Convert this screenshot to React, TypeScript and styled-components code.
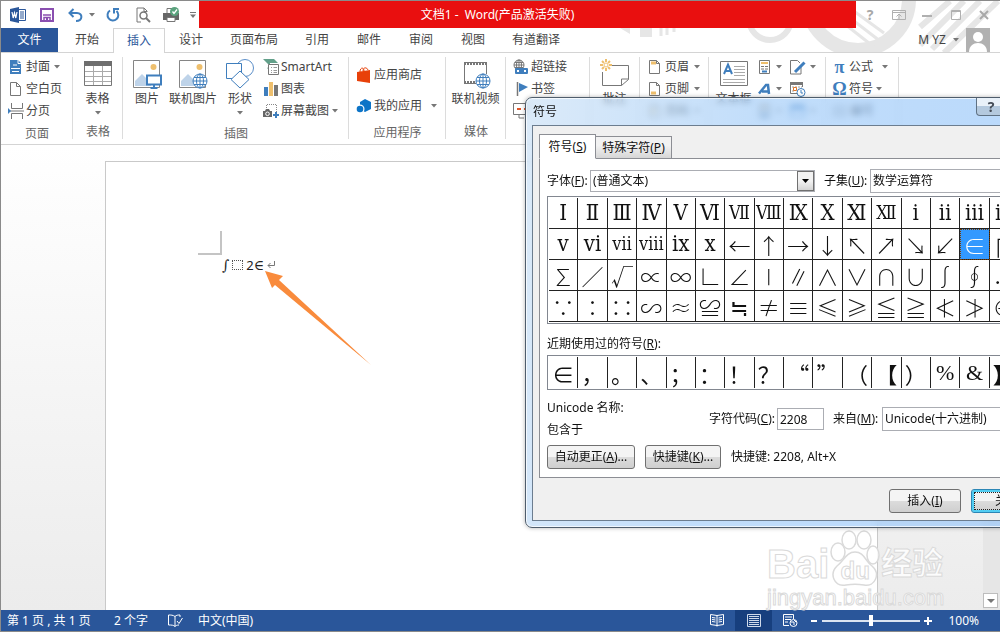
import React from 'react';
import styled, { createGlobalStyle, css } from 'styled-components';

const GlobalStyle = createGlobalStyle`
  *, *::before, *::after { box-sizing: border-box; }
  body { margin: 0; background: #fff; }
  body, button, input, select {
    font-family: "Noto Sans", "Noto Sans CJK SC", sans-serif;
    font-size: 12px;
    line-height: 16px;
    color: #444;
  }
  button { background: none; border: 0; padding: 0; }
  svg { display: block; flex: none; }
`;

const Window = styled.div`
  position: relative;
  display: flex;
  flex-direction: column;
  min-height: 100vh;
  overflow: hidden;
  border: 1px solid #8a8a8a;
  border-width: 1px 0 1px 1px;
`;

/* ---------- Title bar and tabs ---------- */

const Header = styled.header`
  position: relative;
`;

const Decoration = styled.svg`
  position: absolute;
  top: 0;
  right: 0;
  z-index: -1;
`;

const TitleBar = styled.div`
  display: flex;
  height: 27px;
`;

const QuickAccess = styled.div`
  display: flex;
  align-items: center;
  width: 198px;
  padding-left: 9px;
`;

const QuickButton = styled.button<{ $width: number }>`
  display: flex;
  align-items: center;
  gap: 6px;
  width: ${(p) => p.$width}px;
  height: 26px;
`;

const Banner = styled.h1`
  flex: 1;
  margin: 0;
  padding-right: 60px;
  background: #e90f0f;
  color: #fff;
  font-size: 12px;
  font-weight: 400;
  line-height: 27px;
  text-align: center;
  white-space: pre;
`;

const WindowButtons = styled.div`
  display: flex;
  justify-content: space-between;
  align-items: center;
  width: 144px;
  padding: 0 9px 0 7px;
`;

const WindowButton = styled.button`
  display: grid;
  place-items: center;
  width: 14px;
  height: 20px;
  color: #a8a8a8;
  font-size: 14px;
  font-weight: 700;
`;

const TabRow = styled.nav`
  display: flex;
  height: 25px;
  border-bottom: 1px solid #d4d4d4;
`;

const FileTab = styled.button`
  width: 57px;
  margin-right: 3px;
  background: #2a569a;
  color: #fff;
`;

const Tab = styled.button<{ $wide?: boolean; $active?: boolean }>`
  width: ${(p) => (p.$wide ? 74 : 52)}px;
  ${(p) =>
    p.$active &&
    css`
      height: 25px;
      border: 1px solid #d4d4d4;
      border-bottom: 0;
      background: #fff;
      color: #2b579a;
    `}
`;

const Account = styled.div`
  display: flex;
  align-items: center;
  gap: 7px;
  margin-left: auto;
  padding-right: 10px;
`;

/* ---------- Ribbon ---------- */

const Ribbon = styled.div`
  display: flex;
  height: 92px;
  padding-top: 3px;
  border-bottom: 1px solid #d4d4d4;
  background: #fff;
`;

const Group = styled.section<{ $width: number; $pad?: number }>`
  position: relative;
  display: flex;
  flex-direction: column;
  flex: none;
  width: ${(p) => p.$width}px;
  padding-left: ${(p) => p.$pad ?? 0}px;
  &::after {
    content: '';
    position: absolute;
    right: 0;
    top: 1px;
    bottom: 5px;
    width: 1px;
    background: #dcdcdc;
  }
`;

const GroupBody = styled.div`
  display: flex;
  height: 66px;
`;

const GroupLabel = styled.div<{ $shift?: number }>`
  margin-left: -${(p) => p.$shift ?? 0}px;
  line-height: 24px;
  color: #666;
  text-align: center;
`;

const Column = styled.div<{ $pad?: number; $width?: number }>`
  display: flex;
  flex-direction: column;
  padding-top: ${(p) => p.$pad ?? 0}px;
  width: ${(p) => (p.$width ? `${p.$width}px` : 'auto')};
`;

const SmallButton = styled.button<{ $height?: number }>`
  display: flex;
  align-items: center;
  gap: 2px;
  height: ${(p) => p.$height ?? 22}px;
  white-space: nowrap;
`;

const BigButton = styled.button<{ $width: number }>`
  display: flex;
  flex-direction: column;
  align-items: center;
  width: ${(p) => p.$width}px;
  padding-top: 3px;
  white-space: nowrap;
`;

const BigLabel = styled.span`
  margin: 2px 0 4px;
`;

const CaretShape = styled.svg<{ $gap?: number }>`
  margin-left: ${(p) => p.$gap ?? 0}px;
`;

const Caret = ({ gap }: { gap?: number }) => (
  <CaretShape $gap={gap} width="6" height="4" viewBox="0 0 6 4">
    <path d="M0 0h6L3 3.5z" fill="#777" />
  </CaretShape>
);

/* ---------- Icons ---------- */

const Svg = ({ w, h, children }: { w: number; h: number; children: React.ReactNode }) => (
  <svg width={w} height={h} viewBox={`0 0 ${w} ${h}`} fill="none" stroke="#777" aria-hidden="true">
    {children}
  </svg>
);

const BLUE = '#3f7ebd';

const WordIcon = () => (
  <Svg w={17} h={16}>
    <path d="M9 2.5h6.5v11H9M10 5h4M10 7h4M10 9h4M10 11h4" stroke="#2b579a" />
    <path d="M0 2l9-2v16l-9-2z" fill="#2b579a" stroke="none" />
    <path d="M2 5l1.2 6L4.500 6l1.300 5L7 5" stroke="#fff" strokeWidth="1.200" />
  </Svg>
);

const SaveIcon = () => (
  <Svg w={14} h={14}>
    <path d="M1 1h12v12H1z" stroke="#8a4fb0" strokeWidth="2" />
    <path d="M3 7h8M4 13V9.500h6V13" stroke="#8a4fb0" strokeWidth="1.500" />
    <path d="M6 10h2v3H6z" fill="#8a4fb0" stroke="none" />
  </Svg>
);

const UndoIcon = () => (
  <Svg w={15} h={14}>
    <path d="M2 5h7c6 0 6 8-1 8" stroke={BLUE} strokeWidth="2" />
    <path d="M5.500 1L1.500 5l4 4" stroke={BLUE} strokeWidth="2" />
  </Svg>
);

const RedoIcon = () => (
  <Svg w={14} h={14}>
    <path d="M4 2.500A5.400 5.400 0 1 0 10.500 3" stroke={BLUE} strokeWidth="2" />
    <path d="M8 5.500V1h5" stroke={BLUE} strokeWidth="2" />
  </Svg>
);

const PreviewIcon = () => (
  <Svg w={15} h={16}>
    <path d="M5 15H1V1h7l3 3v1M8 1v3.500h3" />
    <circle cx="7.500" cy="8.500" r="3.500" strokeWidth="1.500" fill="#fff" />
    <path d="M10 11l4 4" strokeWidth="2" />
  </Svg>
);

const PrintIcon = () => (
  <Svg w={17} h={16}>
    <path d="M0 6h16v7H0z" fill="#666" stroke="none" />
    <path d="M4 6V1.500h5V6M4 10.500h8v4H4z" fill="#fff" />
    <circle cx="11.500" cy="4.500" r="4.500" fill="#5aa27d" stroke="none" />
    <path d="M9.500 4.500l1.500 2 3-4" stroke="#fff" strokeWidth="1.300" />
  </Svg>
);

const Globe = ({ cx, cy, r = 7, color = BLUE }: { cx: number; cy: number; r?: number; color?: string }) => (
  <g stroke={color}>
    <circle cx={cx} cy={cy} r={r} fill="#fff" />
    <ellipse cx={cx} cy={cy} rx={r / 2} ry={r} />
    <path d={`M${cx} ${cy - r}v${2 * r}M${cx - r} ${cy}h${2 * r}M${cx - r + 1} ${cy - r / 2}h${2 * r - 2}M${cx - r + 1} ${cy + r / 2}h${2 * r - 2}`} />
  </g>
);

const CoverIcon = () => (
  <Svg w={16} h={16}>
    <path d="M2 1h8l3 3v11H2z" fill={BLUE} stroke="none" />
    <path d="M10 1v3.500h3M5 6h4M3 9.500h9M4 12.500h7" stroke="#fff" />
  </Svg>
);

const BlankIcon = () => (
  <Svg w={16} h={16}>
    <path d="M2.500 1.500h6l4 4v9h-10zM8.500 1.500v4h4" />
  </Svg>
);

const BreakIcon = () => (
  <Svg w={16} h={16}>
    <path d="M3.500 0v5.500h11V0M3.500 16v-5.500h11V16M2 8h14" />
    <path d="M0 5l3 3-3 3z" fill={BLUE} stroke="none" />
  </Svg>
);

const TableIcon = () => (
  <Svg w={28} h={30}>
    <path d="M.5 2.500h27v24H.5z" fill="#fff" />
    <path d="M0 2h28v5H0z" fill="#6e6e6e" stroke="none" />
    <path d="M1 12.500h26M1 17.500h26M1 22.500h26M9.500 7v19M18.500 7v19" stroke="#aaa" />
  </Svg>
);

const PictureBase = () => (
  <>
    <path d="M1.500 1.500h26v27h-26z" fill="#fff" stroke="#858585" />
    <circle cx="21.500" cy="8" r="3" fill="#eebf6d" stroke="none" />
    <path d="M3 27V22l7-7 9 9v3z" fill="#bed3e9" stroke="none" />
  </>
);

const PictureIcon = () => (
  <Svg w={30} h={30}>
    <PictureBase />
    <path d="M15 16.500h14v9H15z" fill="#fff" stroke={BLUE} strokeWidth="2" />
    <path d="M22 26v3M18.500 29h7" stroke={BLUE} strokeWidth="2" />
  </Svg>
);

const OnlinePictureIcon = () => (
  <Svg w={30} h={30}>
    <PictureBase />
    <Globe cx={22} cy={22} />
  </Svg>
);

const ShapesIcon = () => (
  <Svg w={30} h={30}>
    <circle cx="20" cy="9" r="8.500" stroke="#5c8fc9" />
    <path d="M1.500 4.500h15v15h-15z" fill="#fff" stroke={BLUE} />
    <path d="M15 12l9 8.500-9 8.500-9-8.500z" fill="#fff" stroke={BLUE} />
  </Svg>
);

const SmartArtIcon = () => (
  <Svg w={16} h={16}>
    <path d="M0 0h11l4 4H7v4l-3 2 2-4z" fill="#63a08a" stroke="none" />
    <path d="M5.500 5.500h10v10h-10z" fill="#fff" />
    <path d="M8 8.500h1M10.500 8.500H14M8 11.500h1M10.500 11.500H14M8 13.500h1M10.500 13.500H14" stroke="#999" />
  </Svg>
);

const ChartIcon = () => (
  <Svg w={16} h={16}>
    <path d="M1 6h4v9H1z" fill={BLUE} stroke="none" />
    <path d="M6 1h4v14H6z" fill="#eebf6d" stroke="none" />
    <path d="M11 4h4v11h-4z" fill="#777" stroke="none" />
  </Svg>
);

const ScreenshotIcon = () => (
  <Svg w={16} h={16}>
    <path d="M3.500 5V1.500h10V9" stroke="#888" strokeDasharray="1 1" />
    <path d="M0 8h2l1-2h3l1 2h2v6H0z" fill="#666" stroke="none" />
    <circle cx="4.500" cy="10.800" r="1.800" stroke="#fff" />
    <path d="M13 9v6M10 12h6" stroke={BLUE} strokeWidth="2" />
  </Svg>
);

const StoreIcon = () => (
  <Svg w={16} h={16}>
    <path d="M4 5c0-5 4-5 4-1M7 4c0-4 4-4 5-1" stroke="#e8410a" />
    <path d="M1 5l13-2v13L1 14z" fill="#e8410a" stroke="none" />
  </Svg>
);

const MyAppsIcon = () => (
  <Svg w={16} h={16}>
    <path d="M9 1l6 3v7l-6 3-5-3V4z" fill="#0d74c7" stroke="none" />
    <circle cx="4" cy="11" r="4.500" fill="#fff" stroke="none" />
    <circle cx="4" cy="11" r="3.300" fill="#0d74c7" stroke="none" />
  </Svg>
);

const VideoIcon = () => (
  <Svg w={30} h={30}>
    <path d="M3.500 3v21M25.500 3v12" />
    <path d="M3 4.500h23M3 23.500h12" strokeWidth="3" strokeDasharray="2 1" />
    <path d="M3 3.500h23M3 24.500h12" />
    <Globe cx={22} cy={22} />
  </Svg>
);

const LinkIcon = () => (
  <Svg w={16} h={16}>
    <Globe cx={6} cy={6} r={5} color="#777" />
    <path d="M3 10h5v4H3zM9 10h5v4H9zM6 12h5" fill="#fff" stroke={BLUE} strokeWidth="2" strokeLinejoin="round" />
  </Svg>
);

const BookmarkIcon = () => (
  <Svg w={16} h={16}>
    <path d="M4.500 1v14" strokeWidth="1.500" />
    <path d="M6 2l9 4-9 5z" fill={BLUE} stroke="none" />
  </Svg>
);

const CrossRefIcon = () => (
  <Svg w={16} h={16}>
    <path d="M.5.5h13v11H.5zM6 12v3h5" fill="#fff" />
    <path d="M4 6h4M11 6h2" stroke="#e0572c" strokeWidth="2" />
  </Svg>
);

const CommentIcon = () => (
  <Svg w={30} h={30}>
    <path d="M12 6.500h16.500v14l-7 6H2.500V13M28.500 20h-7v6.500" />
    <g stroke="#eebf6d" strokeWidth="2">
      <path d="M6 0v3M6 9v3M0 6h3M9 6h3M2 2l2 2M8 8l2 2M10 2L8 4M4 8l-2 2" />
    </g>
    <circle cx="6" cy="6" r="2" stroke="#eebf6d" fill="#fff" />
  </Svg>
);

const PageBandIcon = ({ y }: { y: number }) => (
  <Svg w={16} h={16}>
    <path d="M2.500 1.500h7l3 3v10h-10zM9.500 1.500v3h3" />
    <path d={`M4 ${y}h5`} stroke="#eebf6d" strokeWidth="3" />
  </Svg>
);

const TextBoxIcon = () => (
  <Svg w={28} h={30}>
    <path d="M.5 2.500h27v24H.5z" fill="#fff" />
    <path d="M4 15L8 5.500 12 15M5.500 12h5" stroke={BLUE} strokeWidth="2" />
    <path d="M14 7.500h11M14 10.500h11M14 13.500h11M14 16.500h11M3 20.500h22M3 23.500h22" stroke="#aaa" />
  </Svg>
);

const QuickPartsIcon = () => (
  <Svg w={14} h={16}>
    <path d="M1.500 1.500h10v13h-10z" />
    <path d="M3 4h7" stroke="#eebf6d" strokeWidth="2" />
    <path d="M3 7.500h3M7 7.500h3M3 10h3M7 10h3" />
    <path d="M4 12.500h5" stroke={BLUE} strokeWidth="2" />
  </Svg>
);

const WordArtIcon = () => (
  <Svg w={14} h={16}>
    <path d="M1 12.500L8 4h2l1 9M4 10.500h6" stroke={BLUE} strokeWidth="2.500" />
  </Svg>
);

const SignatureIcon = () => (
  <Svg w={18} h={16}>
    <path d="M12 8v7H1.500V1.500h7L11 4" />
    <path d="M15.500 3.500L6 13" stroke={BLUE} strokeWidth="3" />
  </Svg>
);

const DateIcon = () => (
  <Svg w={18} h={16}>
    <path d="M1.500 2v10.500H8M13.500 2v4" />
    <path d="M1 2.500h13" strokeWidth="3" />
    <path d="M3 6h10M3 10h3" strokeDasharray="2 1" stroke="#999" />
    <path d="M4.500 6.500h3v3h-3z" stroke="#e0772c" />
    <circle cx="12" cy="11.500" r="4" fill="#fff" stroke={BLUE} />
    <path d="M12 9v3h2" stroke={BLUE} />
  </Svg>
);

const ObjectIcon = () => (
  <Svg w={18} h={16}>
    <path d="M1.500 2.500h14v11h-14z" stroke={BLUE} />
    <path d="M1 4h15" stroke={BLUE} strokeWidth="4" />
  </Svg>
);

const SymbolIcon = styled.span`
  width: 15px;
  color: #3f7ebd;
  font-family: "Liberation Serif", serif;
  font-size: 18px;
  font-weight: 700;
  text-align: center;
`;

const NumberIcon = () => (
  <Svg w={16} h={16}>
    <path d="M1.500 2.500h12v11h-12z" stroke="#888" />
    <path d="M4 8h7" strokeWidth="2" />
  </Svg>
);

/* ---------- Document ---------- */

const Workspace = styled.main`
  position: relative;
  display: flex;
  flex: 1;
  background: linear-gradient(#fff, #ececec);
`;

const Canvas = styled.div`
  display: flex;
  flex: 1;
  justify-content: center;
  padding: 16px 1px 0 0;
`;

const Page = styled.article`
  position: relative;
  width: 773px;
  padding: 69px 92px 0;
  border: 1px solid #c9c9c9;
  border-bottom: 0;
  background: #fff;
`;

const CropMark = styled.div`
  width: 24px;
  height: 24px;
  border: solid #c4c4c4;
  border-width: 0 2px 2px 0;
`;

const Formula = styled.p`
  display: flex;
  align-items: center;
  gap: 3px;
  margin: 0 0 0 24px;
  color: #222;
  font-family: "Noto Sans", "DejaVu Sans", sans-serif;
  font-size: 13px;
  line-height: 20px;
`;

const MathSign = styled.span`
  font-family: "DejaVu Serif", serif;
  font-size: 14px;
`;

const Placeholder = styled.span`
  width: 11px;
  height: 10px;
  border: 1px dotted #555;
`;

const Pointer = styled.svg`
  position: absolute;
  left: 159px;
  top: 109px;
`;

const ScrollTrack = styled.div`
  display: flex;
  flex-direction: column;
  justify-content: flex-end;
  width: 17px;
  padding: 0 2px 2px 0;
  background: #e6e6e6;
`;

const ScrollButton = styled.button`
  display: grid;
  place-items: center;
  height: 15px;
  border: 1px solid #bdbdbd;
  background: #fff;
`;

/* ---------- Status bar ---------- */

const StatusBar = styled.footer`
  display: flex;
  align-items: center;
  height: 21px;
  padding: 0 21px 0 6px;
  background: #2a569a;
  color: #fff;
  white-space: pre;
`;

const StatusText = styled.span<{ $width: number }>`
  width: ${(p) => p.$width}px;
`;

const Spacer = styled.span`
  flex: 1;
`;

const ViewButton = styled.button<{ $active?: boolean }>`
  display: grid;
  place-items: center;
  width: 37px;
  height: 21px;
  background: ${(p) => (p.$active ? '#173f7e' : 'none')};
`;

const ZoomButton = styled.button`
  width: 10px;
`;

const ZoomSlider = styled.input`
  appearance: none;
  width: 98px;
  height: 12px;
  margin: 0 3px;
  background: linear-gradient(#dbe4f1, #dbe4f1) center / 100% 2px no-repeat;
  &::-webkit-slider-thumb {
    appearance: none;
    width: 4px;
    height: 11px;
    background: #fff;
  }
`;

const ZoomValue = styled.span`
  margin-left: 15px;
`;

/* ---------- Symbol dialog ---------- */

const Dialog = styled.section`
  position: absolute;
  left: 524px;
  top: 96px;
  width: 532px;
  padding: 0 6px 6px;
  border: 1px solid #4f5d6c;
  border-radius: 7px;
  background: linear-gradient(100deg, rgba(200, 223, 245, 0.65), rgba(160, 203, 248, 0.65) 40%, rgba(145, 195, 250, 0.65));
  backdrop-filter: blur(3px);
  box-shadow: inset 0 0 0 1px rgba(255, 255, 255, 0.7), 0 0 4px rgba(0, 0, 0, 0.3);
  color: #111;
  button, input, select { color: #111; }
`;

const DialogTitle = styled.div`
  display: flex;
  align-items: flex-start;
  height: 27px;
`;

const DialogName = styled.h2`
  flex: 1;
  margin: 0 0 0 1px;
  font-size: 12px;
  font-weight: 400;
  line-height: 28px;
`;

const CaptionButton = styled.button<{ $width: number }>`
  width: ${(p) => p.$width}px;
  height: 18px;
  border: 1px solid #5f7183;
  border-top: 0;
  border-radius: 0 0 4px 4px;
  background: linear-gradient(#e9f1f9 50%, #b4c9de 50%);
  font-size: 14px;
  font-weight: 700;
  line-height: 17px;
  && { color: #444c57; }
`;

const DialogBody = styled.div`
  padding: 8px 6px 7px;
  border: 1px solid #6c7d8f;
  background: #f0f0f0;
`;

const DialogTabs = styled.div`
  display: flex;
  align-items: flex-end;
  position: relative;
  margin-bottom: -1px;
`;

const DialogTab = styled.button<{ $width: number; $active?: boolean }>`
  width: ${(p) => p.$width}px;
  height: 23px;
  border: 1px solid #8c8e94;
  border-left-width: 0;
  background: linear-gradient(#f2f2f2 40%, #d6d6d6);
  ${(p) =>
    p.$active &&
    css`
      height: 25px;
      border-left-width: 1px;
      border-bottom-color: #fff;
      background: #fff;
    `}
`;

const Panel = styled.div`
  padding: 10px 5px 8px 7px;
  border: 1px solid #8c8e94;
  background: #fff;
`;

const FieldRow = styled.div`
  display: flex;
  align-items: center;
  height: 24px;
  margin-bottom: 3px;
`;

const FieldLabel = styled.label<{ $width: number }>`
  flex: none;
  width: ${(p) => p.$width}px;
  white-space: nowrap;
`;

const SelectBox = styled.div<{ $width?: number; $tall?: boolean }>`
  display: flex;
  flex: ${(p) => (p.$width ? 'none' : 1)};
  width: ${(p) => (p.$width ? `${p.$width}px` : 'auto')};
  height: ${(p) => (p.$tall ? 24 : 22)}px;
  margin-right: ${(p) => (p.$width ? 9 : 0)}px;
  border: 1px solid #abadb3;
  select {
    appearance: none;
    flex: 1;
    min-width: 0;
    border: 0;
    padding: 0 0 0 2px;
    background: #fff;
  }
`;

const SelectArrow = styled.span`
  display: grid;
  place-items: center;
  width: 17px;
  border: 1px solid #707070;
  background: linear-gradient(#f2f2f2 50%, #d4d4d4);
`;

const Downward = () => (
  <SelectArrow>
    <svg width="7" height="4" viewBox="0 0 7 4">
      <path d="M0 0h7L3.500 4z" fill="#000" />
    </svg>
  </SelectArrow>
);

const GridFrame = styled.div`
  display: flex;
  padding: 1px;
  border: 1px solid #828790;
`;

const SymbolGrid = styled.div`
  display: grid;
  flex: 1;
  grid-template-columns: repeat(16, minmax(0, 1fr));
  grid-auto-rows: 31px;
`;

const glyphFonts = {
  serif: '"Liberation Serif", "DejaVu Serif Condensed", "DejaVu Serif", serif',
  wide: '"Noto Sans CJK SC", "DejaVu Sans", sans-serif',
};

const Cell = styled.button<{ $selected?: boolean; $lined?: boolean; $font: keyof typeof glyphFonts; $size: number }>`
  display: flex;
  align-items: center;
  justify-content: center;
  overflow: hidden;
  border-right: 1px solid #222;
  border-bottom: ${(p) => (p.$lined ? '1px solid #222' : '0')};
  font-family: ${(p) => glyphFonts[p.$font]};
  font-size: ${(p) => p.$size}px;
  font-weight: ${(p) => (p.$font === 'wide' && p.$lined ? 300 : 400)};
  line-height: 28px;
  ${(p) =>
    p.$selected &&
    css`
      outline: 1px dotted #7a3c00;
      outline-offset: -1px;
      background: #3399ff;
      && { color: #fff; }
    `}
`;

const GridScroll = styled.div`
  width: 16px;
  background: #ececec;
`;

const RecentLabel = styled.div`
  margin-top: 8px;
  line-height: 23px;
`;

const DetailRow = styled.div`
  display: flex;
  align-items: center;
  margin: 7px 0 4px;
`;

const UnicodeName = styled.div`
  width: 162px;
  line-height: 22px;
`;

const CodeInput = styled.input`
  width: 47px;
  height: 22px;
  margin-right: 9px;
  padding: 0 2px;
  border: 1px solid #abadb3;
`;

const ButtonRow = styled.div<{ $end?: boolean }>`
  display: flex;
  align-items: center;
  gap: 10px;
  justify-content: ${(p) => (p.$end ? 'flex-end' : 'flex-start')};
  margin-top: ${(p) => (p.$end ? 11 : 0)}px;
`;

const PushButton = styled.button<{ $width: number; $default?: boolean }>`
  width: ${(p) => p.$width}px;
  height: 24px;
  border: 1px solid #707070;
  border-radius: 3px;
  background: linear-gradient(#f4f4f4 50%, #dcdcdc 50%, #cfcfcf);
  ${(p) =>
    p.$default &&
    css`
      border-color: #2c86b5;
      box-shadow: inset 0 0 0 2px #52cdf2;
      outline: 1px dotted #222;
      outline-offset: -4px;
    `}
`;

/* ---------- Watermark ---------- */

const Watermark = styled.div`
  position: absolute;
  left: 766px;
  bottom: 21px;
  width: 182px;
  color: rgba(255, 255, 255, 0.85);
  font-family: "Liberation Sans", "Noto Sans CJK SC", sans-serif;
  font-weight: 700;
  -webkit-text-stroke: 1px #dadada;
`;

const WatermarkTop = styled.div`
  display: flex;
  align-items: flex-end;
  font-size: 40px;
  line-height: 44px;
`;

const Paw = styled.div`
  display: grid;
  place-items: end center;
  width: 52px;
  height: 58px;
  svg, span { grid-area: 1 / 1; }
  span { z-index: 1; font-size: 24px; line-height: 30px; }
`;

const WatermarkCjk = styled.span`
  font-size: 31px;
`;

const WatermarkUrl = styled.div`
  font-size: 22px;
  font-weight: 400;
  line-height: 24px;
`;

const ROMAN = [...'ⅠⅡⅢⅣⅤⅥⅦⅧⅨⅩⅪⅫⅰⅱⅲⅳⅴⅵⅶⅷⅸⅹ'];
const NARROW = 'ⅦⅧⅫⅶⅷ';
const SYMBOLS = [...ROMAN, ...'←↑→↓↖↗↘↙∈∏∑∕√∝∞∟∠∣∥∧∨∩∪∫∮∴∵∶∷∽≈≌≒≠≡≤≥≦≧≮≯⊕'];
const RECENT = [...'∈，。、；：！？“”（【）%&】'];

const glyphSize = (s: string) => (NARROW.includes(s) ? 18 : 22);

export default function App() {
  return (
    <Window>
      <GlobalStyle />
      <Header>
        <Decoration width="520" height="52" viewBox="0 0 520 52" fill="none" stroke="#e6e6e6" aria-hidden="true">
          <circle cx="290" cy="18" r="21" strokeWidth="6" />
          <circle cx="378" cy="-2" r="51" strokeWidth="14" />
          <path d="M338 2l56 44M348 0l52 40M360 0l44 32" strokeWidth="3" />
          <path d="M484 0l-44 44M500 0l-48 48M518 0l-54 52M470 0l-30 26" strokeWidth="6" />
          <path d="M160 22h12v14h-12zM140 27l10 6v-6z" fill="#e6e6e6" strokeWidth="0" />
          <path d="M181 26v9M187 26v8M194 26v5" strokeWidth="3" />
        </Decoration>
        <TitleBar>
          <QuickAccess>
            <QuickButton $width={30} aria-label="Word"><WordIcon /></QuickButton>
            <QuickButton $width={28} aria-label="保存"><SaveIcon /></QuickButton>
            <QuickButton $width={38} aria-label="撤消"><UndoIcon /><Caret /></QuickButton>
            <QuickButton $width={30} aria-label="重复"><RedoIcon /></QuickButton>
            <QuickButton $width={27} aria-label="打印预览"><PreviewIcon /></QuickButton>
            <QuickButton $width={27} aria-label="打印"><PrintIcon /></QuickButton>
            <QuickButton $width={8} aria-label="自定义">
              <Svg w={6} h={6}><path d="M0 .5h6" /><path d="M0 2.500h6L3 6z" fill="#777" stroke="none" /></Svg>
            </QuickButton>
          </QuickAccess>
          <Banner>{'文档1 -  Word(产品激活失败)'}</Banner>
          <WindowButtons>
            <WindowButton>?</WindowButton>
            <WindowButton aria-label="功能区显示选项">
              <Svg w={14} h={10}><path d="M.5.500h13v9H.5zM.5 2.500h13M7 9V4M4.500 6.500L7 4l2.500 2.500" stroke="#b0b0b0" /></Svg>
            </WindowButton>
            <WindowButton aria-label="最小化">
              <Svg w={10} h={10}><path d="M0 6h10" stroke="#b0b0b0" strokeWidth="2" /></Svg>
            </WindowButton>
            <WindowButton aria-label="最大化">
              <Svg w={10} h={10}><path d="M.5.500h9v9h-9zM0 1.500h10" stroke="#b0b0b0" /></Svg>
            </WindowButton>
            <WindowButton aria-label="关闭窗口">
              <Svg w={10} h={10}><path d="M1 1l8 8M9 1L1 9" stroke="#a8a8a8" strokeWidth="2" /></Svg>
            </WindowButton>
          </WindowButtons>
        </TitleBar>
        <TabRow>
          <FileTab>文件</FileTab>
          <Tab>开始</Tab>
          <Tab $active>插入</Tab>
          <Tab>设计</Tab>
          <Tab $wide>页面布局</Tab>
          <Tab>引用</Tab>
          <Tab>邮件</Tab>
          <Tab>审阅</Tab>
          <Tab>视图</Tab>
          <Tab $wide>有道翻译</Tab>
          <Account>
            <span>M YZ</span>
            <Caret />
            <Svg w={24} h={24}>
              <path d="M0 0h24v24H0z" fill="#b1b1b1" stroke="none" />
              <circle cx="12" cy="9" r="5" fill="#fff" stroke="none" />
              <path d="M3 24c0-12 18-12 18 0z" fill="#fff" stroke="none" />
            </Svg>
          </Account>
        </TabRow>
      </Header>

      <Ribbon>
        <Group $width={72} $pad={7}>
          <GroupBody>
            <Column>
              <SmallButton><CoverIcon />封面<Caret gap={2} /></SmallButton>
              <SmallButton><BlankIcon />空白页</SmallButton>
              <SmallButton><BreakIcon />分页</SmallButton>
            </Column>
          </GroupBody>
          <GroupLabel $shift={7}>页面</GroupLabel>
        </Group>
        <Group $width={50}>
          <GroupBody>
            <BigButton $width={49}><TableIcon /><BigLabel>表格</BigLabel><Caret /></BigButton>
          </GroupBody>
          <GroupLabel>表格</GroupLabel>
        </Group>
        <Group $width={226} $pad={2}>
          <GroupBody>
            <BigButton $width={44}><PictureIcon /><BigLabel>图片</BigLabel></BigButton>
            <BigButton $width={48}><OnlinePictureIcon /><BigLabel>联机图片</BigLabel></BigButton>
            <BigButton $width={46}><ShapesIcon /><BigLabel>形状</BigLabel><Caret /></BigButton>
            <Column>
              <SmallButton><SmartArtIcon />SmartArt</SmallButton>
              <SmallButton><ChartIcon />图表</SmallButton>
              <SmallButton><ScreenshotIcon />屏幕截图<Caret gap={1} /></SmallButton>
            </Column>
          </GroupBody>
          <GroupLabel $shift={2}>插图</GroupLabel>
        </Group>
        <Group $width={97} $pad={7}>
          <GroupBody>
            <Column $pad={3}>
              <SmallButton $height={31}><StoreIcon />应用商店</SmallButton>
              <SmallButton $height={31}><MyAppsIcon />我的应用<Caret gap={7} /></SmallButton>
            </Column>
          </GroupBody>
          <GroupLabel $shift={7}>应用程序</GroupLabel>
        </Group>
        <Group $width={60}>
          <GroupBody>
            <BigButton $width={59}><VideoIcon /><BigLabel>联机视频</BigLabel></BigButton>
          </GroupBody>
          <GroupLabel>媒体</GroupLabel>
        </Group>
        <Group $width={84} $pad={7}>
          <GroupBody>
            <Column>
              <SmallButton><LinkIcon />超链接</SmallButton>
              <SmallButton><BookmarkIcon />书签</SmallButton>
              <SmallButton aria-label="交叉引用"><CrossRefIcon /></SmallButton>
            </Column>
          </GroupBody>
        </Group>
        <Group $width={50}>
          <GroupBody>
            <BigButton $width={49}><CommentIcon /><BigLabel>批注</BigLabel></BigButton>
          </GroupBody>
        </Group>
        <Group $width={69} $pad={7}>
          <GroupBody>
            <Column>
              <SmallButton><PageBandIcon y={4} />页眉<Caret gap={3} /></SmallButton>
              <SmallButton><PageBandIcon y={12} />页脚<Caret gap={3} /></SmallButton>
              <SmallButton><PageBandIcon y={8} />页码<Caret gap={3} /></SmallButton>
            </Column>
          </GroupBody>
        </Group>
        <Group $width={117}>
          <GroupBody>
            <BigButton $width={49}><TextBoxIcon /><BigLabel>文本框</BigLabel></BigButton>
            <Column $width={31}>
              <SmallButton aria-label="文档部件"><QuickPartsIcon /><Caret gap={2} /></SmallButton>
              <SmallButton aria-label="艺术字"><WordArtIcon /><Caret gap={2} /></SmallButton>
              <SmallButton aria-label="首字下沉"><QuickPartsIcon /><Caret gap={2} /></SmallButton>
            </Column>
            <Column>
              <SmallButton aria-label="签名行"><SignatureIcon /><Caret gap={1} /></SmallButton>
              <SmallButton aria-label="日期和时间"><DateIcon /></SmallButton>
              <SmallButton aria-label="对象"><ObjectIcon /><Caret gap={1} /></SmallButton>
            </Column>
          </GroupBody>
        </Group>
        <Group $width={73} $pad={6}>
          <GroupBody>
            <Column>
              <SmallButton><SymbolIcon>π</SymbolIcon>公式<Caret gap={7} /></SmallButton>
              <SmallButton><SymbolIcon>Ω</SymbolIcon>符号<Caret gap={1} /></SmallButton>
              <SmallButton><NumberIcon />编号</SmallButton>
            </Column>
          </GroupBody>
        </Group>
      </Ribbon>

      <Workspace>
        <Canvas>
          <Page>
            <CropMark />
            <Formula>
              <MathSign>∫</MathSign>
              <Placeholder />
              <span>2<MathSign>∈</MathSign></span>
              <Svg w={8} h={8}><path d="M7.500 0v4.500H1M3.500 2L1 4.500 3.500 7" stroke="#777" /></Svg>
            </Formula>
            <Pointer width="108" height="96" viewBox="0 0 108 96" aria-hidden="true">
              <path d="M0 0l18 5-4 4 92 85L10 14l-3 3z" fill="#f98b3c" />
            </Pointer>
          </Page>
        </Canvas>
        <ScrollTrack>
          <ScrollButton aria-label="向下滚动"><Svg w={8} h={4}><path d="M0 0h8L4 4z" fill="#777" stroke="none" /></Svg></ScrollButton>
        </ScrollTrack>
      </Workspace>

      <StatusBar>
        <StatusText $width={107}>第 1 页 , 共 1 页</StatusText>
        <StatusText $width={54}>2 个字</StatusText>
        <StatusText $width={30}>
          <Svg w={15} h={13}>
            <path d="M7 2.500C5 1 3 1 .5 1v10c3 0 5 0 6.500 1.500V2.500C8.500 1 10 1 12 1v2M7 12.500c1-1 2-1.500 4-1.500M9 7l2 2.500L14.500 4" stroke="#fff" />
          </Svg>
        </StatusText>
        <span>中文(中国)</span>
        <Spacer />
        <ViewButton aria-label="阅读视图">
          <Svg w={14} h={13}>
            <path d="M7 1.500L.5.500v10l6.500 1 6.500-1V.500zv11M2 3.500l3.500.5M2 5.500l3.500.5M2 7.500l3.500.5M12 3.500L8.500 4M12 5.500L8.500 6M12 7.500L8.500 8" stroke="#fff" />
          </Svg>
        </ViewButton>
        <ViewButton $active aria-label="页面视图">
          <Svg w={14} h={13}><path d="M.5.500h13v12H.5zM2 2.500h10M2 4.500h10M2 6.500h10M2 8.500h10M2 10.500h10" stroke="#cfdaea" /></Svg>
        </ViewButton>
        <ViewButton aria-label="Web 版式视图">
          <Svg w={15} h={13}>
            <path d="M6 11.500H.5V.500h10V5M2 3h7M2 5.500h6M2 8h3" stroke="#fff" />
            <circle cx="10.500" cy="9" r="3.500" stroke="#fff" />
            <path d="M8 8h3v3M11 6l2 2" stroke="#fff" />
          </Svg>
        </ViewButton>
        <ZoomButton aria-label="缩小"><Svg w={10} h={10}><path d="M2 5h6" stroke="#fff" strokeWidth="2" /></Svg></ZoomButton>
        <ZoomSlider type="range" aria-label="缩放" defaultValue={50} />
        <ZoomButton aria-label="放大"><Svg w={10} h={10}><path d="M1 5h8M5 1v8" stroke="#fff" strokeWidth="2" /></Svg></ZoomButton>
        <ZoomValue>100%</ZoomValue>
      </StatusBar>

      <Watermark>
        <WatermarkTop>
          Bai
          <Paw>
            <svg width="50" height="56" viewBox="0 0 50 56" fill="rgba(255,255,255,.85)" stroke="#dadada" strokeWidth="1.500">
              <ellipse cx="8" cy="22" rx="7" ry="9" />
              <ellipse cx="19" cy="10" rx="7" ry="9" />
              <ellipse cx="34" cy="10" rx="7" ry="9" />
              <ellipse cx="43" cy="25" rx="6" ry="9" />
              <path d="M25 22c9 0 10 9 17 14 9 8 3 21-8 19-6-1-12-1-18 0C4 57-1 44 7 36c7-5 9-14 18-14z" />
            </svg>
            <span>du</span>
          </Paw>
          <WatermarkCjk>经验</WatermarkCjk>
        </WatermarkTop>
        <WatermarkUrl>jingyan.baidu.com</WatermarkUrl>
      </Watermark>

      <Dialog role="dialog" aria-label="符号">
        <DialogTitle>
          <DialogName>符号</DialogName>
          <CaptionButton $width={30}>?</CaptionButton>
          <CaptionButton $width={44} aria-label="关闭对话框" />
        </DialogTitle>
        <DialogBody>
          <DialogTabs role="tablist">
            <DialogTab role="tab" $width={57} $active>符号(<u>S</u>)</DialogTab>
            <DialogTab role="tab" $width={76}>特殊字符(<u>P</u>)</DialogTab>
          </DialogTabs>
          <Panel>
            <FieldRow>
              <FieldLabel $width={43} htmlFor="font">字体(<u>F</u>):</FieldLabel>
              <SelectBox $width={225}>
                <select id="font"><option>(普通文本)</option></select>
                <Downward />
              </SelectBox>
              <FieldLabel $width={46} htmlFor="subset">子集(<u>U</u>):</FieldLabel>
              <SelectBox $tall>
                <select id="subset"><option>数学运算符</option></select>
                <Downward />
              </SelectBox>
            </FieldRow>
            <GridFrame>
              <SymbolGrid>
                {SYMBOLS.map((s, i) => (
                  <Cell key={s} $lined $font={i < ROMAN.length ? 'serif' : 'wide'} $size={glyphSize(s)} $selected={s === '∈'}>
                    {s}
                  </Cell>
                ))}
              </SymbolGrid>
              <GridScroll />
            </GridFrame>
            <RecentLabel>近期使用过的符号(<u>R</u>):</RecentLabel>
            <GridFrame>
              <SymbolGrid>
                {RECENT.map((s) => (
                  <Cell key={s} $font={'%&'.includes(s) ? 'serif' : 'wide'} $size={22}>{s}</Cell>
                ))}
              </SymbolGrid>
              <GridScroll />
            </GridFrame>
            <DetailRow>
              <UnicodeName>
                <div>Unicode 名称:</div>
                <div>包含于</div>
              </UnicodeName>
              <FieldLabel $width={68} htmlFor="code">字符代码(<u>C</u>):</FieldLabel>
              <CodeInput id="code" defaultValue="2208" />
              <FieldLabel $width={49} htmlFor="from">来自(<u>M</u>):</FieldLabel>
              <SelectBox $tall>
                <select id="from"><option>Unicode(十六进制)</option></select>
                <Downward />
              </SelectBox>
            </DetailRow>
            <ButtonRow>
              <PushButton $width={88}>自动更正(<u>A</u>)...</PushButton>
              <PushButton $width={76}>快捷键(<u>K</u>)...</PushButton>
              <span>快捷键: 2208, Alt+X</span>
            </ButtonRow>
          </Panel>
          <ButtonRow $end>
            <PushButton $width={72}>插入(<u>I</u>)</PushButton>
            <PushButton $width={72} $default>关闭</PushButton>
          </ButtonRow>
        </DialogBody>
      </Dialog>
    </Window>
  );
}
